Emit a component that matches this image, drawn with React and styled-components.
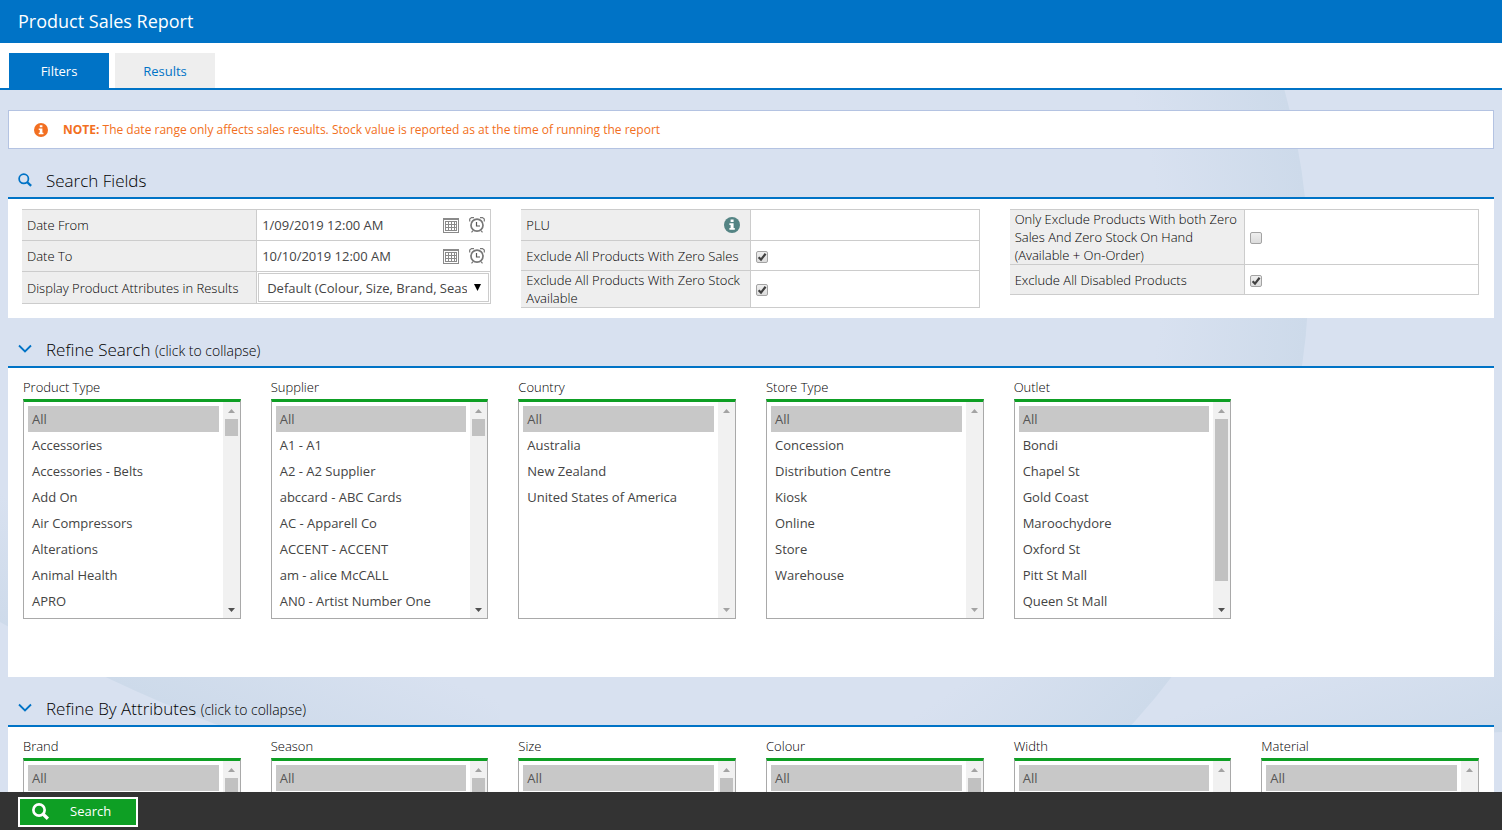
import React from 'react';
import styled, { createGlobalStyle } from 'styled-components';

const BLUE = '#0073c6';
const GREEN = '#0e9f24';

const GlobalStyle = createGlobalStyle`
  * { box-sizing: border-box; }
  body {
    margin: 0;
    height: 100vh;
    overflow: hidden;
    font-family: "Open Sans", "Noto Sans", sans-serif;
    font-size: 13px;
    color: #000;
  }
  #root { height: 100%; }
  button, input, select { font: inherit; color: inherit; }
`;

const Page = styled.div`
  height: 100%;
  display: flex;
  flex-direction: column;
`;

const Header = styled.header`
  flex: none;
  height: 43px;
  padding: 0 18px;
  background: ${BLUE};
  color: #fff;
`;

const Title = styled.h1`
  margin: 0;
  font-size: 18px;
  font-weight: 400;
  line-height: 42px;
`;

const TabBar = styled.nav`
  flex: none;
  display: flex;
  gap: 6px;
  padding: 10px 9px 0;
  background: #fff;
  border-bottom: 2px solid ${BLUE};
`;

const Tab = styled.button`
  width: 100px;
  height: 35px;
  border: 0;
  padding: 0;
  background: ${(p) => (p.$active ? BLUE : '#eee')};
  color: ${(p) => (p.$active ? '#fff' : BLUE)};
`;

const Content = styled.main`
  flex: 1;
  min-height: 0;
  overflow: hidden;
  padding: 20px 8px 0;
  position: relative;
  isolation: isolate;
  background: #d8e1f0;
`;

const BackdropArt = styled.svg`
  position: absolute;
  inset: 0;
  width: 100%;
  height: 100%;
  z-index: -1;
`;

const Note = styled.p`
  margin: 0;
  height: 39px;
  display: flex;
  align-items: center;
  gap: 15px;
  padding: 0 25px;
  background: #fff;
  border: 1px solid #b4c3e2;
  color: #f26f21;
  font-size: 12px;
`;

const SectionTitle = styled.h2`
  margin: 0;
  height: 50px;
  display: flex;
  align-items: center;
  gap: 14px;
  padding: 14px 10px 0;
  border-bottom: 2px solid ${BLUE};
  font-size: 17px;
  font-weight: 300;
`;

const Toggle = styled.button`
  border: 0;
  padding: 0;
  background: none;
  display: flex;
  align-items: center;
  gap: 14px;
`;

const Hint = styled.span`
  font-size: 14px;
`;

const Panel = styled.section`
  background: #fff;
`;

const FieldGrid = styled(Panel)`
  display: grid;
  grid-template-columns: 469fr 458fr 469fr;
  gap: 30px;
  align-items: start;
  padding: 10px 15px 10px 14px;
`;

const FieldGroup = styled.div`
  border: 1px solid #ccc;
  border-left: 0;
`;

const FieldRow = styled.div`
  display: grid;
  grid-template-columns: 1fr 1fr;
  min-height: ${(p) => p.$height}px;
  & + & { border-top: 1px solid #ccc; }
`;

const FieldName = styled.div`
  display: flex;
  align-items: center;
  justify-content: space-between;
  padding: 0 ${(p) => (p.$icon ? 10 : 0)}px 0 5px;
  background: #eee;
  font-weight: 300;
  line-height: 18px;
  white-space: pre-line;
`;

const FieldValue = styled.div`
  display: flex;
  align-items: center;
  gap: 10px;
  padding: ${(p) => (p.$tight ? '1px' : '0 5px')};
  border-left: 1px solid #ccc;
`;

const TextInput = styled.input`
  flex: 1;
  min-width: 0;
  border: 0;
  padding: 0;
  outline: 0;
  background: none;
  color: #444;
`;

const IconButton = styled.button`
  display: flex;
  border: 0;
  padding: 0;
  background: none;
`;

const DropWrap = styled.div`
  flex: 1;
  min-width: 0;
  height: 29px;
  display: grid;
  grid-template-columns: 1fr 21px;
  align-items: center;
  justify-items: center;
  border: 1px solid #ccc;
`;

const Drop = styled.select`
  width: 100%;
  min-width: 0;
  appearance: none;
  border: 0;
  outline: 0;
  padding: 0 0 0 8px;
  background: none;
  color: #444;
`;

const Check = styled.input`
  appearance: none;
  width: 12px;
  height: 12px;
  margin: 2px 0 0;
  border: 1px solid #a3a3a3;
  border-radius: 2px;
  background: linear-gradient(#eee, #dcdcdc);
  &:checked {
    background:
      url("data:image/svg+xml,%3Csvg xmlns='http://www.w3.org/2000/svg' viewBox='0 0 10 10'%3E%3Cpath d='M1.6 5.2 4 7.6 8.6 1.8' fill='none' stroke='%23404040' stroke-width='2.2'/%3E%3C/svg%3E"),
      linear-gradient(#eee, #dcdcdc);
  }
`;

const ListGrid = styled(Panel)`
  display: grid;
  grid-template-columns: repeat(6, 1fr);
  padding: 10px 0 58px;
`;

const ListField = styled.div`
  padding: 0 15px;
  min-width: 0;
`;

const ListLabel = styled.label`
  display: block;
  font-weight: 300;
  line-height: 18px;
  padding-bottom: 3px;
`;

const ListFrame = styled.div`
  display: flex;
  height: 220px;
  border: 1px solid #a9a9a9;
  border-top: 3px solid ${GREEN};
  background: #fff;
`;

const List = styled.select`
  flex: 1;
  min-width: 0;
  height: 100%;
  border: 0;
  outline: 0;
  padding: 4px;
  background: none;
  color: #333;
  overflow-y: auto;
  scrollbar-width: none;
  option {
    padding: 4px 4px 0;
    min-height: 26px;
    color: #444;
  }
  option:checked {
    background: #c8c8c8 linear-gradient(#c8c8c8, #c8c8c8);
    color: #555;
  }
`;

const Track = styled.div`
  flex: none;
  width: 17px;
  display: flex;
  flex-direction: column;
  align-items: center;
  background: #f1f1f1;
`;

const Thumb = styled.div`
  width: 13px;
  height: ${(p) => p.$size}px;
  background: #c1c1c1;
`;

const Arrow = styled.div`
  width: 17px;
  height: 17px;
  display: grid;
  place-items: center;
  color: ${(p) => (p.$on ? '#505050' : '#a3a3a3')};
  ${(p) => p.$down && 'margin-top: auto;'}
`;

const Footer = styled.footer`
  flex: none;
  height: 38px;
  display: flex;
  align-items: flex-end;
  padding: 0 18px 3px;
  background: #333;
`;

const SearchButton = styled.button`
  width: 120px;
  height: 30px;
  display: flex;
  align-items: center;
  gap: 21px;
  padding: 0 12px 2px;
  border: 2px solid #fff;
  background: ${GREEN};
  color: #fff;
`;

const SearchIcon = ({ size, color, weight }) => (
  <svg width={size} height={size} viewBox="0 0 16 16" fill="none" stroke={color} aria-hidden="true">
    <circle cx="6.6" cy="6.6" r="5.300" strokeWidth={weight} />
    <path d="M10.300 10.300l4.700 4.500" strokeWidth={weight + 0.7} />
  </svg>
);

const InfoIcon = ({ size, color }) => (
  <svg width={size} height={size} viewBox="0 0 16 16" aria-hidden="true">
    <circle cx="8" cy="8" r="8" fill={color} />
    <path d="M6.6 2.6h3v2.3h-3zM5.4 6.2h4.2v4.8h1.2v1.8H5.4V11h1.2V8H5.4z" fill="#fff" />
  </svg>
);

const ChevronIcon = () => (
  <svg width="14" height="14" viewBox="0 0 14 14" fill="none" stroke={BLUE} strokeWidth="1.8" aria-hidden="true">
    <path d="M1 3.5l6 6 6-6" />
  </svg>
);

const CalendarIcon = () => (
  <svg width="16" height="16" viewBox="0 0 16 16" shapeRendering="crispEdges" aria-hidden="true">
    <path d="M0 1h16v15H0z" fill="#8a8a8a" />
    <path d="M1 3h14v12H1z" fill="#fff" />
    <path d="M2 4h12v10H2z" fill="#8a8a8a" />
    <path d="M3 5h2v2H3zM6 5h2v2H6zM9 5h2v2H9zM12 5h1v2h-1zM3 8h2v2H3zM6 8h2v2H6zM9 8h2v2H9zM12 8h1v2h-1zM3 11h2v2H3zM6 11h2v2H6zM9 11h2v2H9zM12 11h1v2h-1z" fill="#fff" />
  </svg>
);

const ClockIcon = () => (
  <svg width="16" height="16" viewBox="0 0 16 16" fill="none" stroke="#777" aria-hidden="true">
    <circle cx="8" cy="8.200" r="6" strokeWidth="1.700" />
    <path d="M7.500 5v4H11" strokeWidth="1.200" stroke="#555" />
    <path d="M.7 4.500V2L2.500.6H5M15.300 4.500V2L13.500.6H11M2.500 15.400l1.500-1.800M13.500 15.400L12 13.600" strokeWidth="1.200" />
  </svg>
);

const Triangle = ({ down, height = 4 }) => (
  <svg width="7" height={height} viewBox="0 0 7 4" preserveAspectRatio="none" aria-hidden="true">
    <path d={down ? 'M0 0h7L3.500 4z' : 'M0 4h7L3.500 0z'} fill="currentColor" />
  </svg>
);

const Backdrop = () => (
  <BackdropArt aria-hidden="true">
    <defs>
      <radialGradient id="arc" gradientUnits="userSpaceOnUse" cx="637" cy="180" r="672">
        <stop offset="0.78" stopColor="#cddaea" stopOpacity="0" />
        <stop offset="1" stopColor="#cddaea" />
      </radialGradient>
      <linearGradient id="sweep" gradientUnits="userSpaceOnUse" x1="110" y1="590" x2="160" y2="470">
        <stop offset="0" stopColor="#cddaea" />
        <stop offset="1" stopColor="#cddaea" stopOpacity="0" />
      </linearGradient>
      <linearGradient id="corner" gradientUnits="userSpaceOnUse" x1="1370" y1="560" x2="1410" y2="680">
        <stop offset="0" stopColor="#cddaea" stopOpacity="0" />
        <stop offset="1" stopColor="#cddaea" />
      </linearGradient>
      <clipPath id="right-half"><rect x="900" width="600" height="800" /></clipPath>
    </defs>
    <circle cx="637" cy="180" r="672" fill="url(#arc)" clipPath="url(#right-half)" />
    <path d="M0 532Q110 594 215 634Q360 680 500 680V300H0z" fill="url(#sweep)" />
    <path d="M1130 660L1502 642V400H1169z" fill="url(#corner)" />
  </BackdropArt>
);

const DateField = ({ id, label, value, height }) => (
  <FieldRow $height={height}>
    <FieldName as="label" htmlFor={id}>{label}</FieldName>
    <FieldValue>
      <TextInput id={id} defaultValue={value} />
      <IconButton aria-label={`${label} calendar`}><CalendarIcon /></IconButton>
      <IconButton aria-label={`${label} time`}><ClockIcon /></IconButton>
    </FieldValue>
  </FieldRow>
);

const CheckField = ({ id, label, height, checked }) => (
  <FieldRow $height={height}>
    <FieldName as="label" htmlFor={id}>{label}</FieldName>
    <FieldValue>
      <Check id={id} type="checkbox" defaultChecked={checked} />
    </FieldValue>
  </FieldRow>
);

const ListBox = ({ label, items = [], thumb = 0 }) => {
  const id = `list-${label.toLowerCase().replace(/\s+/g, '-')}`;
  return (
    <ListField>
      <ListLabel htmlFor={id}>{label}</ListLabel>
      <ListFrame>
        <List id={id} multiple defaultValue={['All']}>
          {['All', ...items].map((item) => <option key={item} value={item}>{item}</option>)}
        </List>
        <Track aria-hidden="true">
          <Arrow><Triangle /></Arrow>
          {thumb > 0 && <Thumb $size={thumb} />}
          <Arrow $down $on={thumb > 0}><Triangle down /></Arrow>
        </Track>
      </ListFrame>
    </ListField>
  );
};

const refineLists = [
  { label: 'Product Type', thumb: 17, items: ['Accessories', 'Accessories - Belts', 'Add On', 'Air Compressors', 'Alterations', 'Animal Health', 'APRO'] },
  { label: 'Supplier', thumb: 17, items: ['A1 - A1', 'A2 - A2 Supplier', 'abccard - ABC Cards', 'AC - Apparell Co', 'ACCENT - ACCENT', 'am - alice McCALL', 'AN0 - Artist Number One'] },
  { label: 'Country', items: ['Australia', 'New Zealand', 'United States of America'] },
  { label: 'Store Type', items: ['Concession', 'Distribution Centre', 'Kiosk', 'Online', 'Store', 'Warehouse'] },
  { label: 'Outlet', thumb: 162, items: ['Bondi', 'Chapel St', 'Gold Coast', 'Maroochydore', 'Oxford St', 'Pitt St Mall', 'Queen St Mall'] },
];

const attributeLists = [
  { label: 'Brand', thumb: 17 },
  { label: 'Season', thumb: 17 },
  { label: 'Size', thumb: 17 },
  { label: 'Colour', thumb: 17 },
  { label: 'Width' },
  { label: 'Material' },
];

const CollapsibleTitle = ({ children }) => (
  <SectionTitle>
    <Toggle aria-expanded="true">
      <ChevronIcon />
      <span>{children} <Hint>(click to collapse)</Hint></span>
    </Toggle>
  </SectionTitle>
);

export default function App() {
  return (
    <Page>
      <GlobalStyle />
      <Header><Title>Product Sales Report</Title></Header>
      <TabBar>
        <Tab $active>Filters</Tab>
        <Tab>Results</Tab>
      </TabBar>
      <Content>
        <Backdrop />
        <Note>
          <InfoIcon size={14} color="#f26f21" />
          <span><b>NOTE:</b> The date range only affects sales results. Stock value is reported as at the time of running the report</span>
        </Note>

        <SectionTitle><SearchIcon size={14} color={BLUE} weight={2} />Search Fields</SectionTitle>
        <FieldGrid>
          <FieldGroup>
            <DateField id="date-from" label="Date From" value="1/09/2019 12:00 AM" height={30} />
            <DateField id="date-to" label="Date To" value="10/10/2019 12:00 AM" height={31} />
            <FieldRow $height={32}>
              <FieldName as="label" htmlFor="attributes">Display Product Attributes in Results</FieldName>
              <FieldValue $tight>
                <DropWrap>
                  <Drop id="attributes">
                    <option>Default (Colour, Size, Brand, Season)</option>
                  </Drop>
                  <Triangle down height={7} />
                </DropWrap>
              </FieldValue>
            </FieldRow>
          </FieldGroup>
          <FieldGroup>
            <FieldRow $height={30}>
              <FieldName $icon>
                <label htmlFor="plu">PLU</label>
                <InfoIcon size={16} color="#548484" />
              </FieldName>
              <FieldValue><TextInput id="plu" /></FieldValue>
            </FieldRow>
            <CheckField id="zero-sales" label="Exclude All Products With Zero Sales" height={30} checked />
            <CheckField id="zero-stock" label={'Exclude All Products With Zero Stock\nAvailable'} height={37} checked />
          </FieldGroup>
          <FieldGroup>
            <CheckField id="zero-both" label={'Only Exclude Products With both Zero\nSales And Zero Stock On Hand\n(Available + On-Order)'} height={54} />
            <CheckField id="disabled" label="Exclude All Disabled Products" height={30} checked />
          </FieldGroup>
        </FieldGrid>

        <CollapsibleTitle>Refine Search</CollapsibleTitle>
        <ListGrid>
          {refineLists.map((list) => <ListBox key={list.label} {...list} />)}
        </ListGrid>

        <CollapsibleTitle>Refine By Attributes</CollapsibleTitle>
        <ListGrid>
          {attributeLists.map((list) => <ListBox key={list.label} {...list} />)}
        </ListGrid>
      </Content>
      <Footer>
        <SearchButton><SearchIcon size={17} color="#fff" weight={2.5} />Search</SearchButton>
      </Footer>
    </Page>
  );
}
